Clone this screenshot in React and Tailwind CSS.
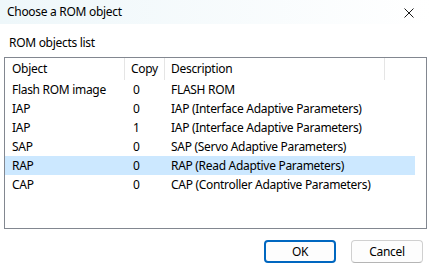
import React from "react";

const rows = [
  { obj: "Flash ROM image", copy: "0", desc: "FLASH ROM" },
  { obj: "IAP", copy: "0", desc: "IAP (Interface Adaptive Parameters)" },
  { obj: "IAP", copy: "1", desc: "IAP (Interface Adaptive Parameters)" },
  { obj: "SAP", copy: "0", desc: "SAP (Servo Adaptive Parameters)" },
  { obj: "RAP", copy: "0", desc: "RAP (Read Adaptive Parameters)", selected: true },
  { obj: "CAP", copy: "0", desc: "CAP (Controller Adaptive Parameters)" },
];

export default function App() {
  return (
    <div
      className="w-[432px] h-[270px] bg-white text-[12px] tracking-[-0.3px] text-black flex flex-col overflow-hidden"
      style={{ fontFamily: '"Noto Sans", "Open Sans", sans-serif' }}
    >
      {/* title bar */}
      <div className="h-[24px] flex items-center justify-between pl-[7px] pr-[18px] bg-gradient-to-r from-[#eef7fa] to-white">
        <span className="text-[12px]">Choose a ROM object</span>
        <svg width="10" height="10" viewBox="0 0 10 10" className="mt-[2px]">
          <path d="M0.5 0.5 L9.5 9.5 M9.5 0.5 L0.5 9.5" stroke="#1a1a1a" strokeWidth="1" />
        </svg>
      </div>

      <div className="pl-[9px] pt-[10px] h-[33px] leading-[18px]">ROM objects list</div>

      {/* list view */}
      <div className="mx-[4px] w-[423px] h-[172px] border border-[#828790] flex flex-col">
        <div className="h-[22px] flex items-stretch">
          <div className="w-[120px] pl-[7px] flex items-center border-r border-[#e5e5e5]">Object</div>
          <div className="w-[40px] pl-[6px] flex items-center border-r border-[#e5e5e5]">Copy</div>
          <div className="w-[220px] pl-[6px] flex items-center border-r border-[#e5e5e5]">Description</div>
        </div>
        {rows.map((r, i) => (
          <div
            key={i}
            className={
              "h-[19px] w-[410px] flex items-center " + (r.selected ? "bg-[#cce8ff]" : "")
            }
          >
            <div className="w-[120px] pl-[7px]">{r.obj}</div>
            <div className="w-[40px] pl-[8px]">{r.copy}</div>
            <div className="pl-[6px] whitespace-nowrap">{r.desc}</div>
          </div>
        ))}
      </div>

      {/* buttons */}
      <div className="flex justify-end gap-[15px] pr-[9px] pt-[11px]">
        <button className="w-[72px] h-[23px] rounded-[4px] border-2 border-[#0067c0] bg-[#fdfdfd] flex items-center justify-center">
          OK
        </button>
        <button className="w-[72px] h-[23px] rounded-[4px] border border-[#d0d0d0] border-b-[#b5b5b5] bg-[#fdfdfd] flex items-center justify-center">
          Cancel
        </button>
      </div>
    </div>
  );
}
